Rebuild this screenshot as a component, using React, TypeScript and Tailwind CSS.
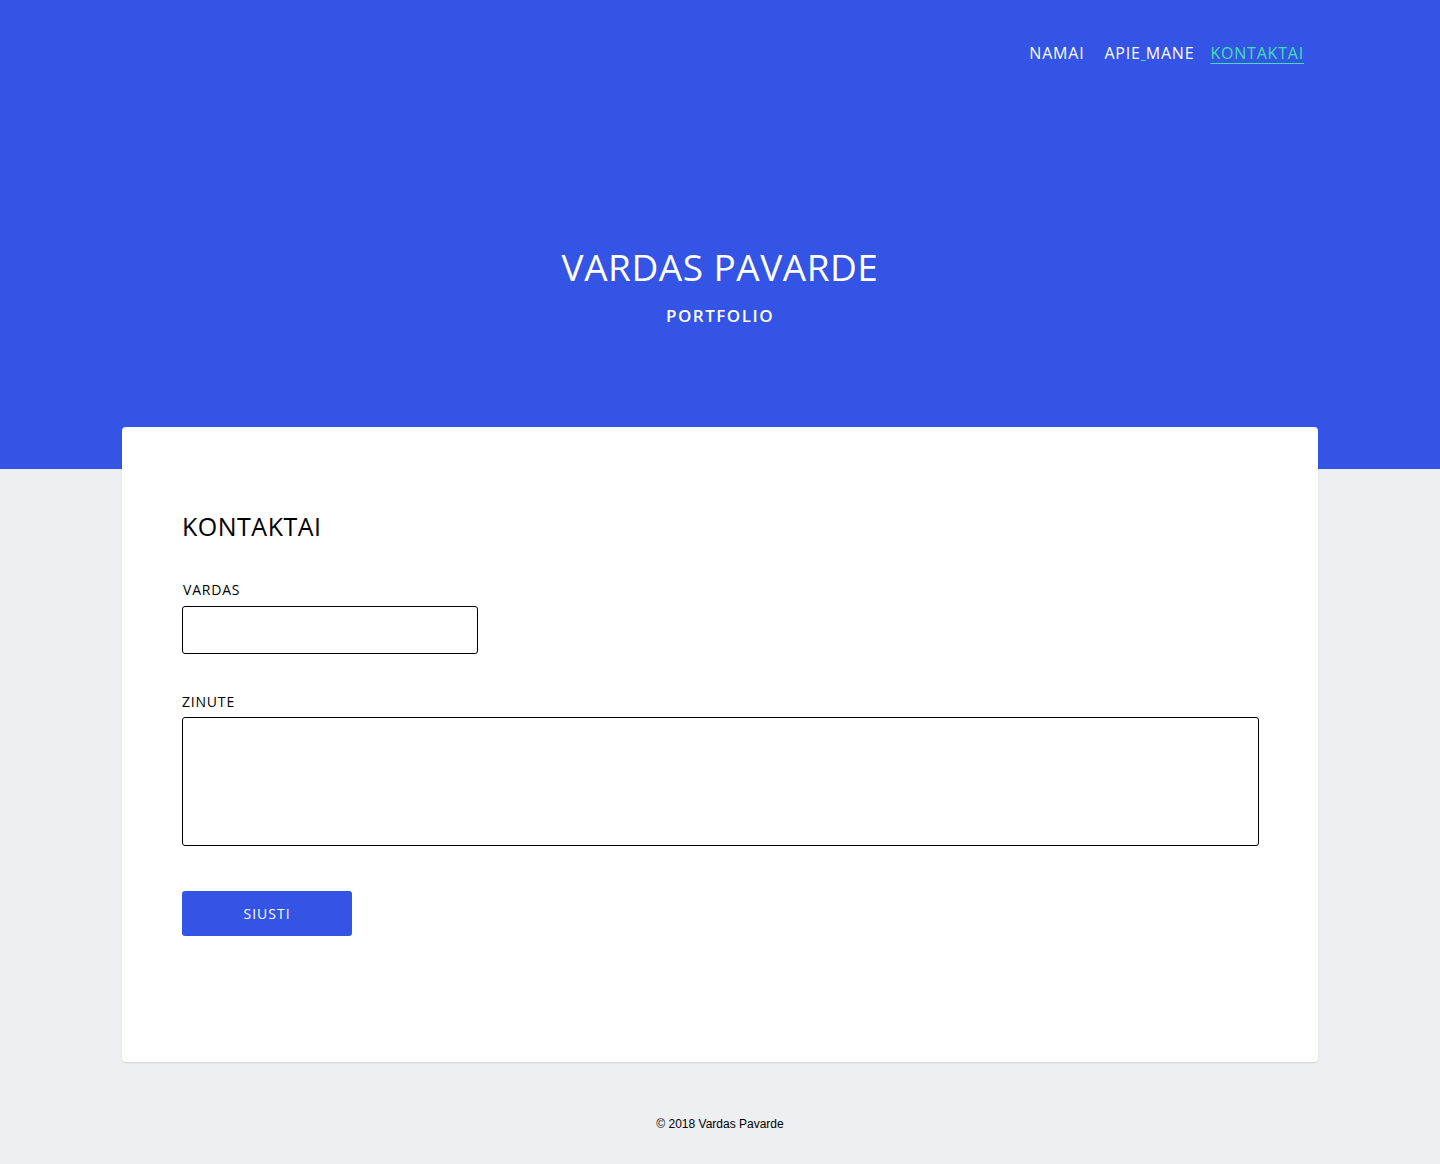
import React from 'react';

const font = { fontFamily: '"Open Sans", "Liberation Sans", sans-serif' };

const App: React.FC = () => {
  return (
    <div className="min-h-[1164px] bg-[#edeff3] text-black" style={font}>
      {/* header / hero */}
      <header className="h-[469px] bg-[#3454e5] text-white">
        <nav className="flex justify-end items-center pr-[136px] pt-[41px] text-[16px] leading-6 tracking-[0.8px]">
          <a className="cursor-pointer">NAMAI</a>
          <a className="cursor-pointer ml-[20px]">
            APIE<span className="underline decoration-[#3ee0b0]"> </span>MANE
          </a>
          <a className="cursor-pointer ml-[16px] text-[#3ee0b0] underline underline-offset-[4px]">KONTAKTAI</a>
        </nav>
        <div className="flex flex-col items-center pt-[179px]">
          <h1 className="text-[37px] leading-[46px] tracking-[0.5px] font-normal">VARDAS PAVARDE</h1>
          <p className="mt-[14px] text-[17px] leading-6 font-semibold tracking-[1.5px]">PORTFOLIO</p>
        </div>
      </header>

      {/* contact card */}
      <main className="w-[1196px] mx-auto -mt-[42px] bg-white rounded-[4px] shadow-[0_1px_2px_rgba(0,0,0,0.12)] pl-[60px] pr-[59px] pt-[82px] pb-[126px]">
        <h2 className="text-[25px] leading-[34px] tracking-[0.5px]">KONTAKTAI</h2>
        <form className="mt-[37px]" onSubmit={(e) => e.preventDefault()}>
          <label className="block text-[14px] leading-5 tracking-[0.8px] mb-[6px] pl-px">VARDAS</label>
          <input
            type="text"
            className="block w-[296px] h-[48px] border border-black rounded-[3px] px-3 outline-none"
          />
          <label className="block text-[14px] leading-5 tracking-[0.8px] mt-[38px] mb-[5px]">ZINUTE</label>
          <textarea className="block w-full h-[129px] border border-black rounded-[3px] px-3 py-2 outline-none resize-none" />
          <button
            type="submit"
            className="mt-[45px] w-[170px] h-[45px] bg-[#3454e5] text-white text-[14px] tracking-[1px] rounded-[3px]"
          >
            SIUSTI
          </button>
        </form>
      </main>

      <footer
        className="text-center text-[12px] leading-4 pt-[54px] pb-[33px]"
        style={{ fontFamily: '"Liberation Sans", Arial, sans-serif' }}
      >
        © 2018 Vardas Pavarde
      </footer>
    </div>
  );
};

export default App;
